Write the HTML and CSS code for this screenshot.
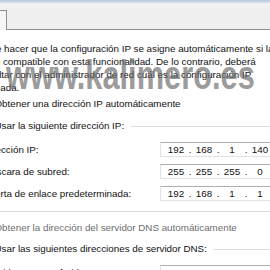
FILE: index.html
```html
<!DOCTYPE html>
<html lang="es">
<head>
<meta charset="utf-8">
<title>Propiedades TCP/IPv4</title>
<link rel="stylesheet" href="styles.css">
</head>
<body>
<div class="frame"></div>
<div class="tabstrip"><div class="tab"></div></div>
<main class="panel">
  <div class="intro-wrap">
    <p class="intro">Puede hacer que la configuración IP se asigne automáticamente si la<br>red es compatible con esta funcionalidad. De lo contrario, deberá<br>consultar con el administrador de red cuál es la configuración IP<br>apropiada.</p>
    <div class="watermark">www.kalimero.es</div>
  </div>
  <div class="radio">Obtener una dirección IP automáticamente</div>
  <section class="group">
    <div class="group-head"><span class="radio">Usar la siguiente dirección IP:</span><span class="rule"></span></div>
    <div class="field-row">
      <span class="label">Dirección IP:</span>
      <span class="ipbox"><span class="oct">192</span><span class="dot">.</span><span class="oct">168</span><span class="dot">.</span><span class="oct">1</span><span class="dot">.</span><span class="oct">140</span></span>
    </div>
    <div class="field-row">
      <span class="label">Máscara de subred:</span>
      <span class="ipbox"><span class="oct">255</span><span class="dot">.</span><span class="oct">255</span><span class="dot">.</span><span class="oct">255</span><span class="dot">.</span><span class="oct">0</span></span>
    </div>
    <div class="field-row">
      <span class="label">Puerta de enlace predeterminada:</span>
      <span class="ipbox"><span class="oct">192</span><span class="dot">.</span><span class="oct">168</span><span class="dot">.</span><span class="oct">1</span><span class="dot">.</span><span class="oct">1</span></span>
    </div>
  </section>
  <div class="radio disabled dns-auto">Obtener la dirección del servidor DNS automáticamente</div>
  <section class="group open">
    <div class="group-head"><span class="radio">Usar las siguientes direcciones de servidor DNS:</span><span class="rule"></span></div>
    <div class="field-row">
      <span class="label">Servidor DNS preferido:</span>
      <span class="ipbox"><span class="oct"></span><span class="dot">.</span><span class="oct"></span><span class="dot">.</span><span class="oct"></span><span class="dot">.</span><span class="oct"></span></span>
    </div>
  </section>
</main>
</body>
</html>
```
FILE: styles.css
```css
html, body {
  margin: 0;
  padding: 0;
}
body {
  width: 270px;
  height: 270px;
  overflow: hidden;
  background: #ffffff;
  font-family: "Liberation Sans", Arial, sans-serif;
  font-size: 9.8px;
  color: #111111;
}
.frame {
  height: 3px;
  background: linear-gradient(#b9cbe0, #d6e1ec);
}
.tabstrip {
  height: 26px;
  background: #f0f0f0;
  border-bottom: 1px solid #8d9096;
  display: flex;
  align-items: flex-end;
}
.tab {
  width: 6px;
  height: 19px;
  margin-bottom: -1px;
  background: #f6f6f6;
  border: 1px solid #8d9096;
  border-left: none;
  border-bottom: none;
}
.panel {
  padding-top: 12px;
}
.intro-wrap {
  position: relative;
  margin-bottom: 3px;
}
.intro {
  margin: 0 0 0 -27px;
  line-height: 13px;
  white-space: nowrap;
}
.watermark {
  position: absolute;
  left: 6px;
  top: 13px;
  font-family: "Liberation Sans", Arial, sans-serif;
  font-weight: bold;
  font-size: 40px;
  line-height: 40px;
  color: rgba(105, 105, 105, 0.68);
  transform: scaleX(0.77);
  transform-origin: left top;
  white-space: nowrap;
  pointer-events: none;
}
.radio {
  height: 14px;
  line-height: 14px;
  margin-left: -5.5px;
  white-space: nowrap;
}
.panel > .radio {
  margin-bottom: 8px;
}
.radio.disabled {
  color: #6d6d6d;
}
.group {
  border-bottom: 1px solid #d5dfe5;
  padding-bottom: 7px;
}
.group.open {
  border-bottom: none;
}
.group-head {
  display: flex;
  align-items: center;
  height: 14px;
  margin-bottom: 5px;
}
.group-head .radio {
  flex: none;
}
.rule {
  flex: 1;
  height: 1px;
  margin-left: 7px;
  background: #d5dfe5;
}
.field-row {
  display: flex;
  align-items: center;
  height: 22px;
  white-space: nowrap;
}
.label {
  flex: 0 0 177px;
  margin-left: -17px;
}
.ipbox {
  flex: none;
  display: flex;
  align-items: center;
  width: 130px;
  height: 13px;
  padding-left: 3px;
  border: 1px solid #dfe3e8;
  border-top-color: #acaeb4;
  background: #ffffff;
  color: #111111;
}
.oct {
  width: 24px;
  text-align: center;
}
.dot {
  width: 4px;
  text-align: center;
}
.dns-auto {
  margin-top: 9px;
  margin-bottom: 7px !important;
}
```
